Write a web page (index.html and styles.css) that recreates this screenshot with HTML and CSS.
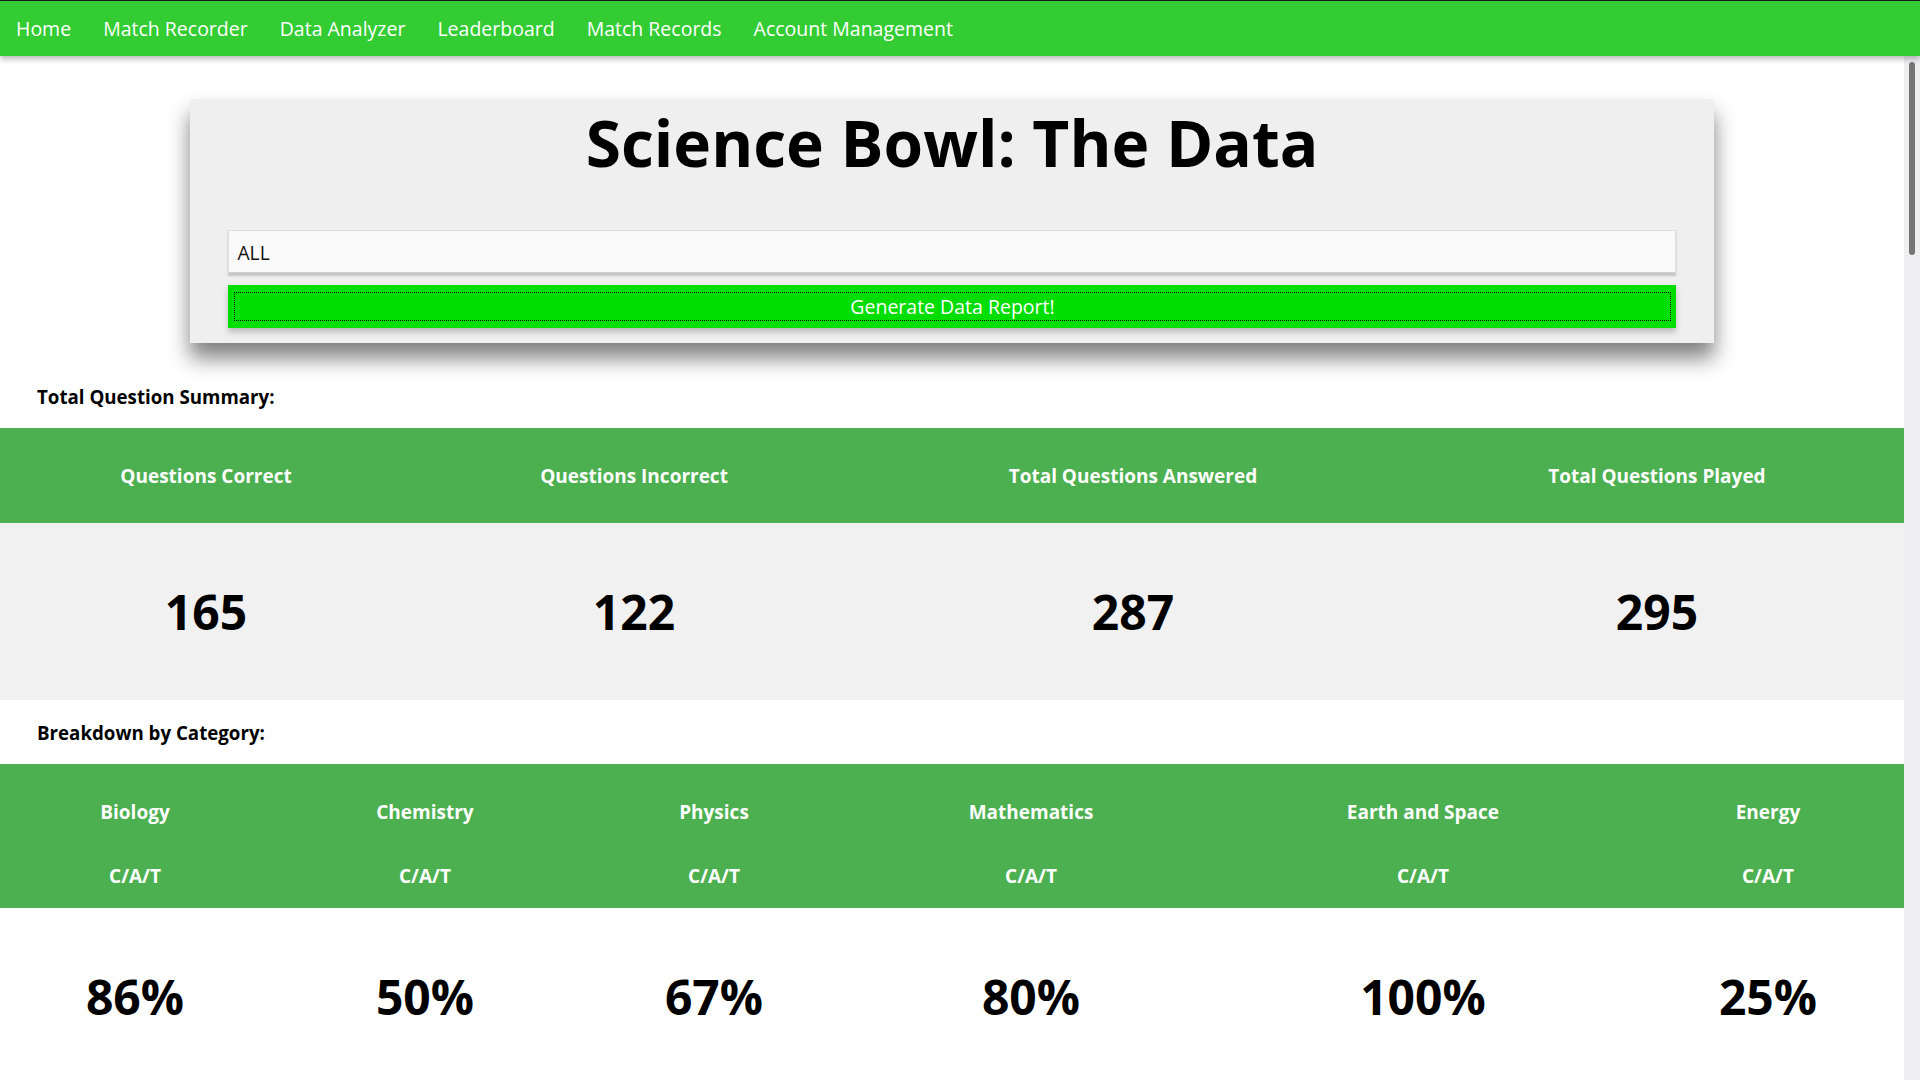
FILE: index.html
```html
<!DOCTYPE html>
<html lang="en">
<head>
<meta charset="utf-8">
<title>Science Bowl: The Data</title>
<link rel="stylesheet" href="styles.css">
</head>
<body>
<nav class="topnav">
  <a class="nav-link" href="#">Home</a>
  <a class="nav-link" href="#">Match Recorder</a>
  <a class="nav-link" href="#">Data Analyzer</a>
  <a class="nav-link" href="#">Leaderboard</a>
  <a class="nav-link" href="#">Match Records</a>
  <a class="nav-link" href="#">Account Management</a>
</nav>
<div class="viewport">
  <main class="page">
    <section class="hero">
      <h1 class="hero-title">Science Bowl: The Data</h1>
      <input class="team-input" type="text" value="ALL">
      <button class="report-btn" type="button"><span class="report-btn-inner">Generate Data Report!</span></button>
    </section>

    <h3 class="section-label">Total Question Summary:</h3>
    <table class="stats-table">
      <colgroup>
        <col class="c1-1"><col class="c1-2"><col class="c1-3"><col class="c1-4">
      </colgroup>
      <thead>
        <tr>
          <th class="head-cell">Questions Correct</th>
          <th class="head-cell">Questions Incorrect</th>
          <th class="head-cell">Total Questions Answered</th>
          <th class="head-cell">Total Questions Played</th>
        </tr>
      </thead>
      <tbody>
        <tr class="gray-row">
          <td class="big-cell">165</td>
          <td class="big-cell">122</td>
          <td class="big-cell">287</td>
          <td class="big-cell">295</td>
        </tr>
      </tbody>
    </table>

    <h3 class="section-label section-label-2">Breakdown by Category:</h3>
    <table class="stats-table">
      <colgroup>
        <col class="c2-1"><col class="c2-2"><col class="c2-3"><col class="c2-4"><col class="c2-5"><col class="c2-6">
      </colgroup>
      <thead>
        <tr>
          <th class="cat-name">Biology</th>
          <th class="cat-name">Chemistry</th>
          <th class="cat-name">Physics</th>
          <th class="cat-name">Mathematics</th>
          <th class="cat-name">Earth and Space</th>
          <th class="cat-name">Energy</th>
        </tr>
        <tr>
          <th class="cat-sub">C/A/T</th>
          <th class="cat-sub">C/A/T</th>
          <th class="cat-sub">C/A/T</th>
          <th class="cat-sub">C/A/T</th>
          <th class="cat-sub">C/A/T</th>
          <th class="cat-sub">C/A/T</th>
        </tr>
      </thead>
      <tbody>
        <tr>
          <td class="big-cell">86%</td>
          <td class="big-cell">50%</td>
          <td class="big-cell">67%</td>
          <td class="big-cell">80%</td>
          <td class="big-cell">100%</td>
          <td class="big-cell">25%</td>
        </tr>
      </tbody>
    </table>
  </main>
  <div class="scrollbar" aria-hidden="true">
    <div class="scroll-thumb"></div>
  </div>
</div>
</body>
</html>
```

FILE: styles.css
```css
html, body {
  margin: 0;
  padding: 0;
  height: 100%;
}

body {
  font-family: "Open Sans", "Noto Sans", sans-serif;
  overflow: hidden;
  background: #ffffff;
  color: #000000;
  display: flex;
  flex-direction: column;
}

/* ---------- top navigation ---------- */
.topnav {
  flex: 0 0 auto;
  height: 55px;
  border-top: 1px solid #1a1a1a;
  background: #33cc33;
  display: flex;
  align-items: center;
  box-shadow: 0 3px 6px rgba(0, 0, 0, 0.28);
  position: relative;
  z-index: 2;
}

.nav-link {
  color: #ffffff;
  text-decoration: none;
  font-size: 19.5px;
  padding: 0 16px;
  line-height: 55px;
}

/* ---------- viewport with scrollbar ---------- */
.viewport {
  flex: 1 1 auto;
  min-height: 0;
  display: flex;
}

.page {
  flex: 1 1 auto;
  min-width: 0;
  overflow: hidden;
}

.scrollbar {
  flex: 0 0 16px;
  background: #efeff1;
  padding-top: 6px;
  box-sizing: border-box;
}

.scroll-thumb {
  width: 6px;
  height: 193px;
  margin-left: 5px;
  background: #767676;
  border-radius: 3px;
}

/* ---------- hero card ---------- */
.hero {
  width: 80%;
  margin: 43px auto 0;
  background: #efefef;
  padding: 0 0 15px;
  box-shadow: 0 15px 20px rgba(0, 0, 0, 0.5);
  display: flex;
  flex-direction: column;
  align-items: center;
}

.hero-title {
  margin: 0 0 44px;
  font-size: 64px;
  font-weight: 700;
  text-align: center;
}

.team-input {
  box-sizing: border-box;
  width: 95%;
  height: 43px;
  margin: 0;
  padding: 2px 8px 0;
  font-family: "Open Sans", "Noto Sans", sans-serif;
  font-size: 19.2px;
  color: #111;
  background: #fafafa;
  border: 1px solid #dedede;
  border-bottom: 1px solid #d0d0d0;
  box-shadow: 0 3px 2px rgba(0, 0, 0, 0.18);
  outline: none;
}

.report-btn {
  box-sizing: border-box;
  width: 95%;
  height: 43px;
  margin: 12px 0 0;
  padding: 7px 5px 7px 6px;
  border: none;
  background: #00dd00;
  color: #ffffff;
  font-family: "Open Sans", "Noto Sans", sans-serif;
  font-size: 19.5px;
  box-shadow: 0 4px 6px rgba(0, 0, 0, 0.22);
  cursor: pointer;
  display: flex;
}

.report-btn-inner {
  flex: 1;
  border: 1px dotted #000;
  line-height: 27px;
  text-align: center;
}

/* ---------- section labels ---------- */
.section-label {
  margin: 41px 0 19px;
  padding-left: 37px;
  font-size: 18.72px;
  font-weight: 700;
  line-height: 25px;
}

.section-label-2 {
  margin-top: 20px;
  margin-bottom: 19px;
}

/* ---------- tables ---------- */
.stats-table {
  width: 100%;
  border-collapse: collapse;
  table-layout: fixed;
}

.c1-1 { width: 21.64%; }
.c1-2 { width: 23.32%; }
.c1-3 { width: 29.09%; }
.c1-4 { width: 25.95%; }

.c2-1 { width: 14.18%; }
.c2-2 { width: 16.28%; }
.c2-3 { width: 14.08%; }
.c2-4 { width: 19.22%; }
.c2-5 { width: 21.95%; }
.c2-6 { width: 14.29%; }

.stats-table thead {
  background: #4caf50;
  color: #ffffff;
}

.head-cell,
.cat-name,
.cat-sub {
  font-size: 19px;
  font-weight: 700;
  line-height: 25px;
  text-align: center;
}

.head-cell {
  padding: 36px 10px 34px;
}

.cat-name {
  padding: 36px 10px 19px;
}

.cat-sub {
  padding: 19.5px 10px 19.5px;
}

.gray-row {
  background: #f1f1f1;
}

.big-cell {
  padding: 56px 10px 55.6px;
  font-size: 48px;
  font-weight: 700;
  line-height: 65.4px;
  text-align: center;
}
```
